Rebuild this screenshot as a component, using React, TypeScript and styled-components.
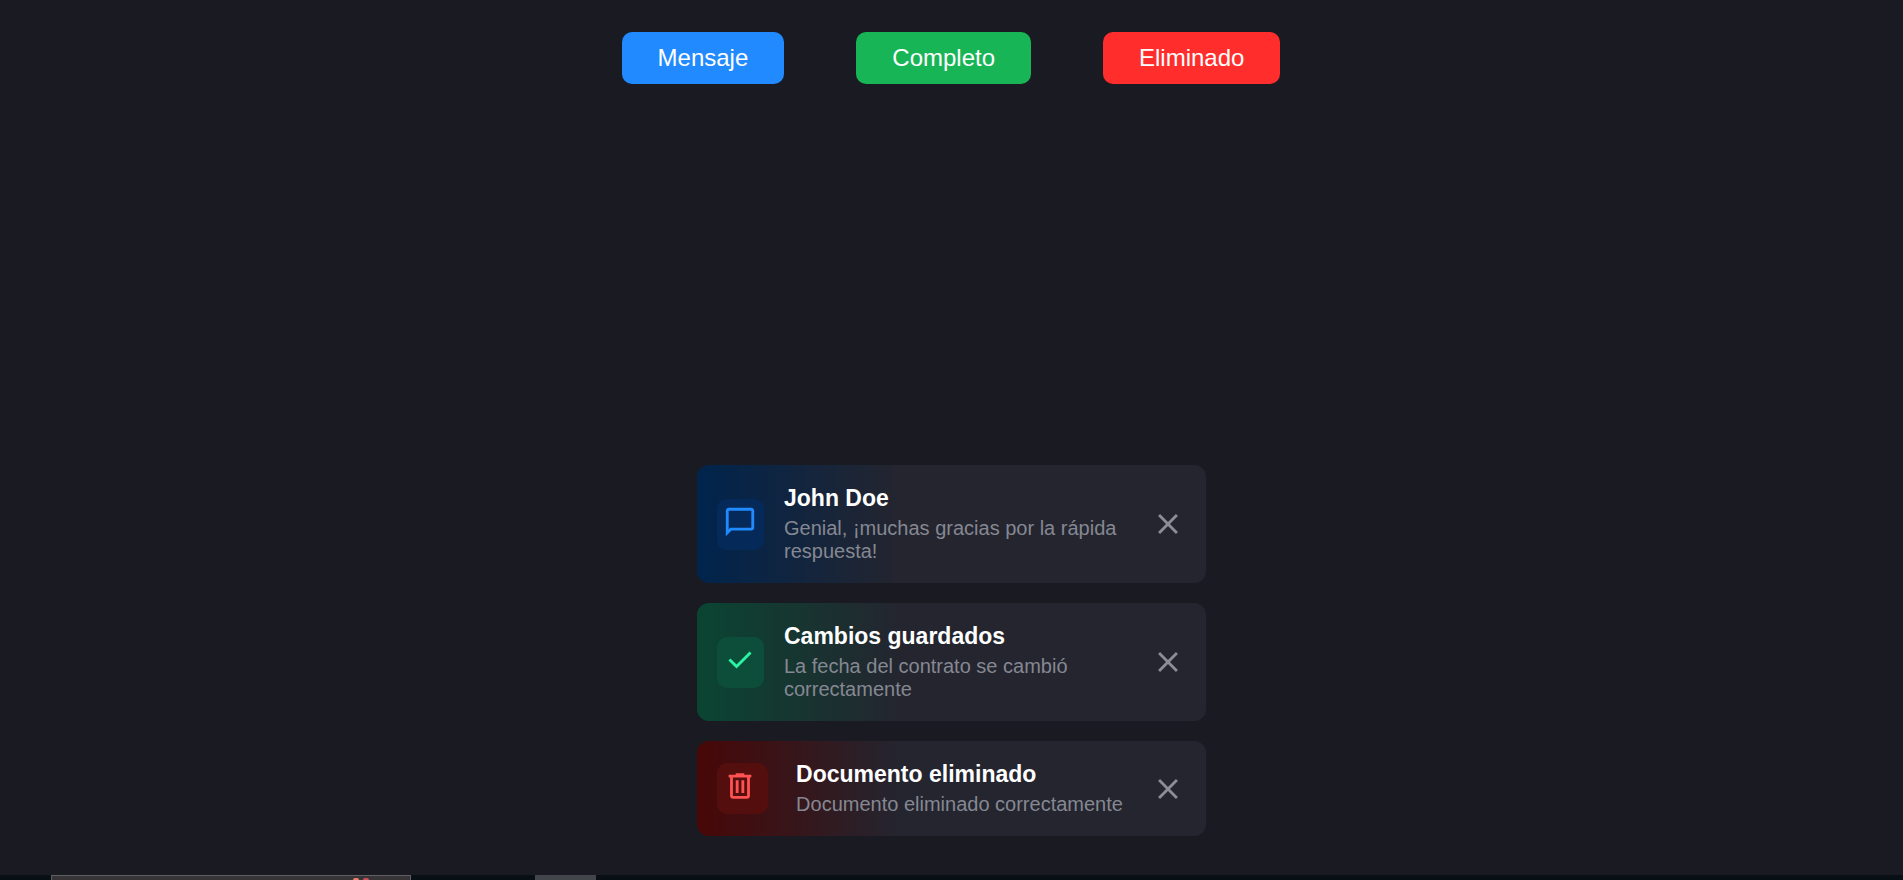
import React, { useState } from "react";
import styled, { createGlobalStyle } from "styled-components";

const GlobalStyle = createGlobalStyle`
  * { box-sizing: border-box; }
  body {
    margin: 0;
    background: #1a1a22;
    font-family: "Liberation Sans", Arial, sans-serif;
  }
`;

type Kind = "message" | "success" | "deleted";

const theme = {
  message: { button: "#218aff", glow: "#00244d", tile: "#052a59", icon: "#218aff" },
  success: { button: "#17b556", glow: "#0a4532", tile: "#0c4e39", icon: "#2af5a4" },
  deleted: { button: "#ff2e2c", glow: "#480707", tile: "#550e0e", icon: "#ff5252" },
};

const paths = {
  message:
    "M2 22V4q0-.825.588-1.413Q3.175 2 4 2h16q.825 0 1.413.587Q22 3.175 22 4v12q0 .825-.587 1.413Q20.825 18 20 18H6Zm3.15-6H20V4H4v13.125Z",
  success: "m9.55 18l-5.7-5.7l1.425-1.425L9.55 15.15l9.175-9.175L20.15 7.4Z",
  deleted:
    "M7 21q-.825 0-1.412-.587Q5 19.825 5 19V6H4V4h5V3h6v1h5v2h-1v13q0 .825-.587 1.413Q17.825 21 17 21ZM17 6H7v13h10ZM9 17h2V8H9Zm4 0h2V8h-2Z",
  close: "M6.4 19L5 17.6l5.6-5.6L5 6.4L6.4 5l5.6 5.6L17.6 5L19 6.4L13.4 12l5.6 5.6l-1.4 1.4l-5.6-5.6Z",
};

const Page = styled.div`
  min-height: 100vh;
  display: flex;
  flex-direction: column;
`;

const Actions = styled.header`
  display: flex;
  flex-wrap: wrap;
  justify-content: center;
  gap: 72px;
  padding: 32px 21px 32px 20px;
`;

const ActionButton = styled.button<{ $kind: Kind }>`
  height: 52px;
  padding: 0 36px;
  border: 0;
  border-radius: 10px;
  background: ${(p) => theme[p.$kind].button};
  color: #fff;
  font: 24px "Liberation Sans", Arial, sans-serif;
  cursor: pointer;
`;

const ToastList = styled.main`
  flex: 1;
  display: flex;
  flex-direction: column;
  justify-content: flex-end;
  gap: 20px;
  width: 100%;
  max-width: 509px;
  margin: 0 auto;
  padding-bottom: 39px;
`;

const Toast = styled.article<{ $kind: Kind }>`
  display: flex;
  align-items: center;
  justify-content: space-between;
  gap: 20px;
  padding: 20px 21px 20px 20px;
  border-radius: 12px;
  background: linear-gradient(to right, ${(p) => theme[p.$kind].glow}, #24252f 40%);
`;

const IconTile = styled.div<{ $kind: Kind }>`
  flex: none;
  width: ${(p) => (p.$kind === "deleted" ? 51 : 47)}px;
  height: 51px;
  padding: 6px;
  border-radius: 10px;
  background: ${(p) => theme[p.$kind].tile};
  color: ${(p) => theme[p.$kind].icon};
`;

const Glyph = styled.svg`
  display: block;
  width: 34px;
  height: 34px;
  fill: currentColor;
`;

const ToastText = styled.div`
  display: flex;
  flex-direction: column;
  gap: 5px;
`;

const Title = styled.h2`
  margin: 0;
  color: #fff;
  font-size: 23px;
  line-height: 27px;
`;

const Description = styled.p`
  margin: 0;
  color: #858892;
  font-size: 20px;
  line-height: 23px;
`;

const CloseButton = styled.button`
  flex: none;
  padding: 0;
  border: 0;
  background: none;
  color: #8b8e99;
  cursor: pointer;
`;

const Taskbar = styled.footer`
  display: flex;
  height: 5px;
  padding-left: 51px;
  background: #080f15;
`;

const TaskWindow = styled.div`
  display: flex;
  justify-content: flex-end;
  align-items: flex-end;
  gap: 4px;
  width: 360px;
  margin-right: 124px;
  padding-right: 41px;
  border: 1px solid #5f5e62;
  border-bottom: 0;
  background: #363436;
`;

const Dot = styled.span<{ $color: string }>`
  width: 6px;
  height: 2px;
  border-radius: 3px 3px 0 0;
  background: ${(p) => p.$color};
`;

const TaskTab = styled.div`
  width: 61px;
  background: #42464a;
`;

const buttons: { kind: Kind; label: string }[] = [
  { kind: "message", label: "Mensaje" },
  { kind: "success", label: "Completo" },
  { kind: "deleted", label: "Eliminado" },
];

const samples: Record<Kind, { title: string; text: string }> = {
  message: { title: "John Doe", text: "Genial, ¡muchas gracias por la rápida respuesta!" },
  success: { title: "Cambios guardados", text: "La fecha del contrato se cambió correctamente" },
  deleted: { title: "Documento eliminado", text: "Documento eliminado correctamente" },
};

function Icon({ name }: { name: keyof typeof paths }) {
  return (
    <Glyph viewBox="0 0 24 24" aria-hidden="true">
      <path d={paths[name]} />
    </Glyph>
  );
}

export default function App() {
  const [toasts, setToasts] = useState<{ id: number; kind: Kind }[]>([
    { id: 1, kind: "message" },
    { id: 2, kind: "success" },
    { id: 3, kind: "deleted" },
  ]);

  const add = (kind: Kind) => setToasts((list) => [...list, { id: Date.now(), kind }]);
  const remove = (id: number) => setToasts((list) => list.filter((t) => t.id !== id));

  return (
    <>
      <GlobalStyle />
      <Page>
        <Actions>
          {buttons.map((b) => (
            <ActionButton key={b.kind} $kind={b.kind} type="button" onClick={() => add(b.kind)}>
              {b.label}
            </ActionButton>
          ))}
        </Actions>
        <ToastList>
          {toasts.map(({ id, kind }) => (
            <Toast key={id} $kind={kind}>
              <IconTile $kind={kind}>
                <Icon name={kind} />
              </IconTile>
              <ToastText>
                <Title>{samples[kind].title}</Title>
                <Description>{samples[kind].text}</Description>
              </ToastText>
              <CloseButton type="button" aria-label="Cerrar" onClick={() => remove(id)}>
                <Icon name="close" />
              </CloseButton>
            </Toast>
          ))}
        </ToastList>
        <Taskbar>
          <TaskWindow>
            <Dot $color="#f0806e" />
            <Dot $color="#d05058" />
          </TaskWindow>
          <TaskTab />
        </Taskbar>
      </Page>
    </>
  );
}
